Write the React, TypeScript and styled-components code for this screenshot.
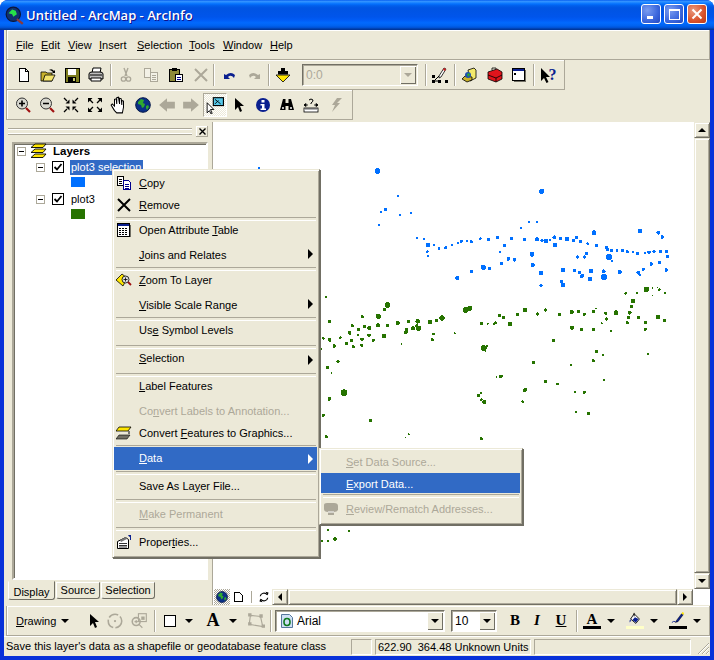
import React from 'react';
import styled, { createGlobalStyle } from 'styled-components';

const UI_FONT = '"Liberation Sans", Arial, sans-serif';
const FACE = '#ece9d8';
const SHADE = '#aca899';
const DARK = '#716f64';
const SELECT = '#316ac5';

const GlobalStyle = createGlobalStyle`
  html, body { margin: 0; padding: 0; background: #fff; }
  * { box-sizing: border-box; }
`;

const Window = styled.div`
  position: relative;
  width: 714px;
  height: 660px;
  display: flex;
  flex-direction: column;
  overflow: hidden;
  background: #0831d9;
  border-radius: 8px 8px 0 0;
  font-family: ${UI_FONT};
  font-size: 11px;
  color: #000;
`;

const TitleBar = styled.div`
  height: 30px;
  flex: none;
  display: flex;
  align-items: center;
  padding: 0 7px 0 5px;
  background: linear-gradient(180deg, #0058ee 0, #3593ff 4%, #288eff 7%, #127dff 10%, #036ffc 14%, #0262ee 18%, #0057e5 24%, #0054e3 30%, #0055eb 56%, #005bf5 66%, #026afe 76%, #0062ef 86%, #0052d6 92%, #0040ab 96%, #003092 100%);
`;

const TitleText = styled.div`
  flex: 1;
  margin-left: 2px;
  color: #fff;
  font-family: "Open Sans", sans-serif;
  font-weight: 600;
  font-size: 13px;
  text-shadow: 1px 1px 0 #0f1089;
`;

const CaptionButtons = styled.div`
  display: flex;
  gap: 3px;
`;

const CaptionButton = styled.div<{ $close?: boolean }>`
  width: 20px;
  height: 20px;
  margin-top: -3px;
  border: 1px solid #fff;
  border-radius: 3px;
  display: flex;
  align-items: center;
  justify-content: center;
  background: ${(p) =>
    p.$close
      ? 'radial-gradient(circle at 30% 30%, #e99a80, #d9512b 60%, #b93a1a)'
      : 'radial-gradient(circle at 30% 30%, #7a9cf0, #3a66dc 60%, #2347c0)'};
`;

const Frame = styled.div`
  flex: 1;
  min-height: 0;
  margin: 0 4px 4px;
  display: flex;
  flex-direction: column;
  background: ${FACE};
`;

const Band = styled.div<{ $fit?: boolean; $pad: number }>`
  height: 30px;
  flex: none;
  display: flex;
  align-items: center;
  margin-left: 2px;
  padding-left: ${(p) => p.$pad}px;
  ${(p) => (p.$fit ? 'align-self: flex-start;' : '')}
  border-left: 1px solid ${SHADE};
  border-bottom: 1px solid ${SHADE};
  border-right: 1px solid ${SHADE};
  box-shadow: inset 1px 1px 0 #fff;
`;

const MenuBar = styled(Band)`
  gap: 10px;
`;

const ToolGroup = styled.div<{ $gap?: number }>`
  display: flex;
  align-items: center;
  gap: ${(p) => p.$gap ?? 0}px;
`;

const ToolButton = styled.div<{ $w?: number }>`
  width: ${(p) => p.$w ?? 24}px;
  height: 24px;
  flex: none;
  display: flex;
  align-items: center;
  justify-content: center;
`;

const PressedButton = styled(ToolButton)`
  border: 1px solid;
  border-color: ${SHADE} #fff #fff ${SHADE};
  background-color: #fff;
  background-image: conic-gradient(${FACE} 25%, #fff 0 50%, ${FACE} 0 75%, #fff 0);
  background-size: 2px 2px;
`;

const HelpMark = styled.span`
  margin-left: -7px;
  font-family: "Liberation Serif", serif;
  font-weight: 700;
  font-size: 16px;
  line-height: 16px;
  color: #0a1f8f;
`;

const ToolSep = styled.div<{ $l?: number; $r?: number }>`
  width: 2px;
  height: 22px;
  flex: none;
  margin: 0 ${(p) => p.$r ?? 1}px 0 ${(p) => p.$l ?? 1}px;
  border-left: 1px solid ${SHADE};
  border-right: 1px solid #fff;
`;

const Combo = styled.div<{ $w: number; $bg?: string }>`
  width: ${(p) => p.$w}px;
  height: 22px;
  flex: none;
  display: flex;
  align-items: center;
  background: ${(p) => p.$bg ?? '#fff'};
  border: 1px solid;
  border-color: ${DARK} #fff #fff ${DARK};
  box-shadow: inset 1px 1px 0 ${SHADE};
`;

const ComboText = styled.div<{ $muted?: boolean }>`
  flex: 1;
  display: flex;
  align-items: center;
  gap: 2px;
  padding-left: 3px;
  font-size: 12px;
  color: ${(p) => (p.$muted ? SHADE : '#000')};
`;

const ComboDrop = styled.div`
  width: 16px;
  height: 18px;
  margin-right: 1px;
  flex: none;
  display: flex;
  align-items: center;
  justify-content: center;
  background: ${FACE};
  box-shadow: inset 1px 1px 0 #fff, inset -1px -1px 0 ${DARK};
`;

const Caret = styled.div<{ $dir?: 'down' | 'up' | 'left' | 'right'; $color?: string; $s?: number }>`
  width: 0;
  height: 0;
  flex: none;
  ${(p) => {
    const s = p.$s ?? 4;
    const c = p.$color ?? '#000';
    switch (p.$dir) {
      case 'up':
        return `border-left:${s}px solid transparent;border-right:${s}px solid transparent;border-bottom:${s}px solid ${c};`;
      case 'left':
        return `border-top:${s}px solid transparent;border-bottom:${s}px solid transparent;border-right:${s}px solid ${c};`;
      case 'right':
        return `border-top:${s}px solid transparent;border-bottom:${s}px solid transparent;border-left:${s}px solid ${c};`;
      default:
        return `border-left:${s}px solid transparent;border-right:${s}px solid transparent;border-top:${s}px solid ${c};`;
    }
  }}
`;

const Middle = styled.div`
  flex: 1;
  min-height: 0;
  display: flex;
  padding: 2px 0 1px;
`;

const Dock = styled.div`
  width: 209px;
  flex: none;
  display: flex;
  flex-direction: column;
  border-right: 1px solid ${SHADE};
  padding: 3px 4px 4px 8px;
`;

const DockHead = styled.div`
  height: 12px;
  flex: none;
  display: flex;
  align-items: center;
  gap: 4px;
  margin: 0 0 5px -4px;
`;

const DockGrip = styled.div`
  flex: 1;
  height: 7px;
  border-top: 1px solid ${SHADE};
  border-bottom: 1px solid ${SHADE};
  box-shadow: inset 0 1px 0 #fff, inset 0 -1px 0 #fff;
`;

const DockClose = styled.div`
  width: 12px;
  height: 11px;
  display: flex;
  align-items: center;
  justify-content: center;
  background: ${FACE};
  box-shadow: inset -1px -1px 0 ${SHADE}, inset 1px 1px 0 #fff;
`;

const TocBox = styled.div`
  flex: 1;
  min-height: 0;
  padding: 2px 0 0;
  background: #fff;
  border: 2px solid;
  border-color: ${SHADE} #fff #fff ${SHADE};
  box-shadow: inset 1px 1px 0 ${DARK};
`;

const TreeRow = styled.div<{ $indent: number }>`
  height: 16px;
  display: flex;
  align-items: center;
  padding-left: ${(p) => p.$indent}px;
`;

const RootRow = styled(TreeRow)`
  height: 10px;
  margin-bottom: 3px;
`;

const Expander = styled.div`
  position: relative;
  width: 9px;
  height: 9px;
  flex: none;
  background: #fff;
  border: 1px solid ${SHADE};
  &::after {
    content: '';
    position: absolute;
    left: 1px;
    top: 3px;
    width: 5px;
    height: 1px;
    background: #000;
  }
`;

const CheckBox = styled.div`
  width: 12px;
  height: 12px;
  flex: none;
  margin-left: 7px;
  border: 1px solid #000;
  background: #fff;
  display: flex;
  align-items: center;
  justify-content: center;
`;

const LayerGroup = styled.div`
  font-weight: 700;
  margin-left: 6px;
  font-size: 11.5px;
`;

const LayerLabel = styled.div<{ $selected?: boolean }>`
  margin-left: 6px;
  padding: 0 2px 0 1px;
  height: 15px;
  line-height: 15px;
  white-space: nowrap;
  color: ${(p) => (p.$selected ? '#fff' : '#000')};
  background: ${(p) => (p.$selected ? SELECT : 'transparent')};
`;

const Swatch = styled.div<{ $color: string }>`
  width: 14px;
  height: 10px;
  margin: 2px 0 4px 57px;
  background: ${(p) => p.$color};
`;

const Tabs = styled.div`
  height: 21px;
  flex: none;
  display: flex;
  align-items: flex-start;
  margin-left: -4px;
  padding-top: 2px;
`;

const Tab = styled.div<{ $active?: boolean; $w: number }>`
  width: ${(p) => p.$w}px;
  height: ${(p) => (p.$active ? 19 : 17)}px;
  margin-top: ${(p) => (p.$active ? -1 : 0)}px;
  margin-right: 1px;
  padding-top: ${(p) => (p.$active ? 3 : 0)}px;
  text-align: center;
  line-height: 15px;
  border: 1px solid;
  border-color: ${(p) => (p.$active ? FACE : '#fff')} ${DARK} ${DARK} #fff;
  border-radius: 0 0 3px 3px;
`;

const MapArea = styled.div`
  flex: 1;
  min-width: 0;
  display: flex;
  flex-direction: column;
`;

const MapRow = styled.div`
  flex: 1;
  min-height: 0;
  display: flex;
`;

const MapCanvas = styled.div`
  flex: 1;
  min-width: 0;
  background: #fff;
  svg { display: block; }
`;

const VScroll = styled.div`
  width: 16px;
  flex: none;
  display: flex;
  flex-direction: column;
`;

const ScrollButton = styled.div`
  width: 16px;
  height: 16px;
  flex: none;
  display: flex;
  align-items: center;
  justify-content: center;
  background: ${FACE};
  border: 1px solid;
  border-color: ${FACE} ${DARK} ${DARK} ${FACE};
  box-shadow: inset 1px 1px 0 #fff, inset -1px -1px 0 ${SHADE};
`;

const ScrollThumb = styled.div`
  flex: 1;
  background: ${FACE};
  border: 1px solid;
  border-color: ${FACE} ${DARK} ${DARK} ${FACE};
  box-shadow: inset 1px 1px 0 #fff, inset -1px -1px 0 ${SHADE};
`;

const HScroll = styled.div`
  height: 16px;
  flex: none;
  display: flex;
  background: #fff;
`;

const ViewTabs = styled.div`
  width: 59px;
  flex: none;
  display: flex;
  align-items: center;
  padding-left: 1px;
  background: #fff;
`;

const ViewTab = styled.div<{ $w: number; $checked?: boolean }>`
  width: ${(p) => p.$w}px;
  height: 16px;
  display: flex;
  align-items: center;
  justify-content: center;
  ${(p) =>
    p.$checked
      ? `background-color:#fff;background-image:conic-gradient(${SHADE} 25%,#fff 0 50%,${SHADE} 0 75%,#fff 0);background-size:2px 2px;`
      : ''}
`;

const ViewSep = styled.div`
  width: 1px;
  height: 12px;
  margin: 0 5px;
  background: ${SHADE};
`;

const Corner = styled.div`
  width: 17px;
  flex: none;
  background: #fff;
`;

const DrawingLabel = styled.div`
  width: 38px;
  margin-right: 7px;
`;

const BoldGlyph = styled.span<{ $italic?: boolean; $under?: boolean; $size?: number }>`
  font-family: "Liberation Serif", serif;
  font-weight: 700;
  font-size: ${(p) => p.$size ?? 15}px;
  font-style: ${(p) => (p.$italic ? 'italic' : 'normal')};
  text-decoration: ${(p) => (p.$under ? 'underline' : 'none')};
`;

const ColorGlyph = styled.div`
  display: flex;
  flex-direction: column;
  align-items: center;
  line-height: 13px;
`;

const ColorBar = styled.div<{ $color: string }>`
  width: 18px;
  height: 3px;
  background: ${(p) => p.$color};
`;

const StatusBar = styled.div`
  height: 20px;
  flex: none;
  display: flex;
  align-items: center;
  padding-top: 2px;
  box-shadow: inset 0 1px 0 #fff;
`;

const StatusPanel = styled.div<{ $w?: number; $grow?: boolean; $plain?: boolean }>`
  ${(p) => (p.$grow ? 'flex: 1;' : `width: ${p.$w}px; flex: none;`)}
  height: 16px;
  line-height: 15px;
  padding-left: 2px;
  margin-right: 3px;
  white-space: nowrap;
  ${(p) => (p.$plain ? '' : `border: 1px solid; border-color: ${SHADE} #fff #fff ${SHADE};`)}
`;

const Grip = styled.div`
  width: 16px;
  height: 16px;
  flex: none;
`;

const PopupMenu = styled.div<{ $left: number; $top: number; $w: number }>`
  position: absolute;
  left: ${(p) => p.$left}px;
  top: ${(p) => p.$top}px;
  width: ${(p) => p.$w}px;
  padding: 2px 2px 3px 1px;
  background: ${FACE};
  border: 1px solid;
  border-color: ${FACE} ${DARK} ${DARK} ${FACE};
  box-shadow: inset 1px 1px 0 #fff, inset -1px -1px 0 ${SHADE}, 1px 1px 0 ${DARK};
`;

const MenuRow = styled.div<{ $h: number; $shift: number; $active?: boolean; $off?: boolean }>`
  position: relative;
  height: ${(p) => p.$h}px;
  padding: ${(p) => Math.max(p.$shift, 0)}px 0 ${(p) => Math.max(-p.$shift, 0)}px 25px;
  display: flex;
  align-items: center;
  white-space: nowrap;
  color: ${(p) => (p.$active ? '#fff' : p.$off ? SHADE : '#000')};
  background: ${(p) => (p.$active ? SELECT : 'transparent')};
`;

const MenuIcon = styled.div`
  position: absolute;
  left: 2px;
  top: 50%;
  margin-top: -8px;
  width: 16px;
  height: 16px;
`;

const MenuArrow = styled.div`
  position: absolute;
  right: 4px;
  top: 50%;
  margin-top: -5px;
`;

const MenuSep = styled.div`
  height: 3px;
  margin: 0 1px 0 2px;
  padding-top: 1px;
  &::after {
    content: '';
    display: block;
    height: 2px;
    border-top: 1px solid ${SHADE};
    border-bottom: 1px solid #fff;
  }
`;

const MenuTitle = styled.div<{ $w: number }>`
  width: ${(p) => p.$w}px;
  white-space: nowrap;
`;

// icons, all on a 16 unit grid
const Ico = ({ s = 16, crisp = false, children }: { s?: number; crisp?: boolean; children: React.ReactNode }) => (
  <svg width={s} height={s} viewBox="0 0 16 16" shapeRendering={crisp ? 'crispEdges' : 'auto'}>
    {children}
  </svg>
);

const GlobeArt = () => (
  <>
    <circle cx="8" cy="8" r="7.3" fill="#0a2f86" stroke="#071a4a" />
    <path d="M3 5l3-3 3 1-1 3 2 1-1 3-2 1-1-3-3-1zM11 9l2-1 1 2-2 3-1-2z" fill="#2fa82f" />
  </>
);

const ArrowArt = ({ fill = '#000' }: { fill?: string }) => (
  <path d="M4 1v12l3-3 2 5 2-1-2-5h4z" fill={fill} />
);

const Icons: Record<string, React.ReactNode> = {
  logo: (
    <Ico s={19}>
      <circle cx="7" cy="7" r="6" fill="#12306e" stroke="#0b1638" />
      <path d="M3 6l3-3 3 1 1 3-3 2-1-2z" fill="#27e04a" />
      <path d="M10 11l5 4" stroke="#8b3a3a" strokeWidth="2" />
    </Ico>
  ),
  newDoc: (
    <Ico crisp>
      <path d="M3.5 1.5h6l3 3v10h-9z" fill="#fff" stroke="#000" />
      <path d="M9.5 1.5v3h3" fill="none" stroke="#000" />
    </Ico>
  ),
  open: (
    <Ico>
      <path d="M1 5h5l1 1h5v8H1z" fill="#c9b12b" stroke="#000" strokeWidth=".8" />
      <path d="M3 14l2-6h10l-3 6z" fill="#f3e36b" stroke="#000" strokeWidth=".8" />
      <path d="M9 3q3-2 5 1l1-1v3h-3l1-1q-2-2-4-2z" fill="#000" />
    </Ico>
  ),
  save: (
    <Ico crisp>
      <rect x="1" y="1" width="14" height="14" fill="#7d7d1e" stroke="#000" />
      <rect x="4" y="2" width="8" height="6" fill="#fff" />
      <rect x="4" y="10" width="8" height="5" fill="#000" />
      <rect x="9" y="11" width="2" height="3" fill="#c9c96a" />
    </Ico>
  ),
  print: (
    <Ico>
      <path d="M5 1h8l-1 5H4z" fill="#fff" stroke="#000" />
      <path d="M1 7q0-2 3-2h8q3 0 3 2v5H1z" fill="#bdbdbd" stroke="#000" />
      <path d="M3 11h10v3H3z" fill="#fff" stroke="#000" />
      <path d="M2 8h12" stroke="#000" />
    </Ico>
  ),
  cut: (
    <Ico>
      <path d="M6 1l3 8M10 1L7 9" stroke={SHADE} strokeWidth="1.4" fill="none" />
      <circle cx="5.5" cy="12" r="2.2" fill="none" stroke={SHADE} strokeWidth="1.3" />
      <circle cx="10.5" cy="12" r="2.2" fill="none" stroke={SHADE} strokeWidth="1.3" />
    </Ico>
  ),
  copyOff: (
    <Ico crisp>
      <path d="M1.5 1.5h6v9h-6z" fill="#f3f1e6" stroke={SHADE} />
      <path d="M7.5 5.5h7v9h-7z" fill="#f3f1e6" stroke={SHADE} />
      <path d="M9 8h4M9 10h4M9 12h4" stroke={SHADE} />
    </Ico>
  ),
  paste: (
    <Ico crisp>
      <rect x="1.5" y="2.5" width="10" height="12" fill="#8d8a37" stroke="#000" />
      <rect x="4" y="1" width="5" height="3" fill="#000" />
      <rect x="7.5" y="7.5" width="7" height="7" fill="#fff" stroke="#000" />
      <path d="M9 10h4M9 12h4" stroke="#00008b" />
    </Ico>
  ),
  delOff: (
    <Ico>
      <path d="M2 2l12 12M14 2L2 14" stroke={SHADE} strokeWidth="2" />
    </Ico>
  ),
  undo: (
    <Ico>
      <path d="M4 8q5-4 9 0l-1 3q-3-4-6-1l2 2H2V7z" fill="#0a1f8f" />
    </Ico>
  ),
  redo: (
    <Ico>
      <path d="M12 8q-5-4-9 0l1 3q3-4 6-1l-2 2h6V7z" fill={SHADE} />
    </Ico>
  ),
  addData: (
    <Ico>
      <path d="M1 8h14l-7 7z" fill="#ffe600" stroke="#000" strokeWidth=".8" />
      <path d="M6 1h4v3h3v3.5H3V4h3z" fill="#000" />
    </Ico>
  ),
  editor: (
    <Ico>
      <path d="M2 14l5-5M8 14H2" stroke="#000" />
      <path d="M7 9l5-8 2 1-5 8-2 1z" fill="#fff" stroke="#000" strokeWidth=".8" />
      <path d="M12 1l2 1-1 2-2-1z" fill="#d02020" />
      <path d="M0 8h3v3H0zM0 13h3v3H0zM6 13h3v3H6zM13 13h3v3h-3z" fill="#000" />
    </Ico>
  ),
  catalog: (
    <Ico>
      <path d="M7 3l6-2 2 2v8l-6 3z" fill="#f3e96a" stroke="#000" strokeWidth=".8" />
      <path d="M1 12l3-3 7 1v3l-5 2z" fill="#c9b12b" stroke="#000" strokeWidth=".8" />
      <circle cx="7" cy="8" r="3" fill="#1c50b0" />
      <path d="M6 7l2-1 1 2-2 2z" fill="#2fa82f" />
    </Ico>
  ),
  toolbox: (
    <Ico>
      <path d="M1 5l9-3 5 3v7l-6 3-8-3z" fill="#e0141c" stroke="#000" strokeWidth=".8" />
      <path d="M1 8l8 3 6-3M9 11v4M5 3V1h4v1" stroke="#000" strokeWidth=".8" fill="none" />
    </Ico>
  ),
  cmd: (
    <Ico crisp>
      <rect x="1.5" y="1.5" width="12" height="12" fill="#fff" stroke="#000" />
      <rect x="2" y="2" width="11" height="2" fill="#0a1f8f" />
      <rect x="14" y="3" width="1" height="11" fill={DARK} />
      <rect x="3" y="14" width="12" height="1" fill={DARK} />
      <path d="M3 6l2 1-2 1" stroke="#000" fill="none" />
    </Ico>
  ),
  helpArrow: (
    <Ico s={16}>
      <path d="M1 1v13l3-3 2.500 5 2-1-2.500-5h4z" fill="#000" />
    </Ico>
  ),
  zoomIn: (
    <Ico>
      <circle cx="7" cy="6.500" r="5.500" fill="#d8d8d0" stroke="#333" />
      <path d="M4 6.500h6M7 3.500v6" stroke="#000" strokeWidth="1.600" />
      <path d="M11 11l4 4" stroke="#a01010" strokeWidth="2.200" />
    </Ico>
  ),
  zoomOut: (
    <Ico>
      <circle cx="7" cy="6.500" r="5.500" fill="#d8d8d0" stroke="#333" />
      <path d="M4 6.500h6" stroke="#000" strokeWidth="1.600" />
      <path d="M11 11l4 4" stroke="#a01010" strokeWidth="2.200" />
    </Ico>
  ),
  fixedIn: (
    <Ico>
      <path d="M6.500 6.500H2.500L6.500 2.500zM9.500 6.500h4l-4-4zM6.500 9.500h-4l4 4zM9.500 9.500h4l-4 4z" fill="#000" />
      <path d="M1 1l3 3M15 1l-3 3M1 15l3-3M15 15l-3-3" stroke="#000" strokeWidth="1.300" />
    </Ico>
  ),
  fixedOut: (
    <Ico>
      <path d="M1 1h4.500L1 5.500zM15 1h-4.500L15 5.500zM1 15h4.500L1 10.500zM15 15h-4.500L15 10.500z" fill="#000" />
      <path d="M3 3l3 3M13 3l-3 3M3 13l3-3M13 13l-3-3" stroke="#000" strokeWidth="1.300" />
    </Ico>
  ),
  pan: (
    <Ico s={18}>
      <path d="M4 13L1 8l1-1 2 2V3l1.500-.500L6 7V1.500L7.500 1 8.500 7V2l1.500.500L10.500 8V4l1.500.500V10l-1 5H6z" fill="#fff" stroke="#000" strokeWidth=".9" />
    </Ico>
  ),
  globe: (
    <Ico>
      <GlobeArt />
    </Ico>
  ),
  back: (
    <Ico s={18}>
      <path d="M1 8l7-6v3h7v6H8v3z" fill={SHADE} />
    </Ico>
  ),
  forward: (
    <Ico s={18}>
      <path d="M15 8L8 2v3H1v6h7v3z" fill={SHADE} />
    </Ico>
  ),
  selectEl: (
    <Ico s={18}>
      <path d="M1 6v9l2-2 1.500 3 1-.500L4 12h3z" fill="#fff" stroke="#000" strokeWidth=".8" />
      <rect x="6.500" y="1.500" width="9" height="7" fill="#57c7e8" stroke="#000" />
      <path d="M8 3l5 4M8 7l3-3" stroke="#000" strokeWidth=".8" />
    </Ico>
  ),
  pointer: (
    <Ico>
      <ArrowArt />
    </Ico>
  ),
  info: (
    <Ico>
      <circle cx="8" cy="8" r="7" fill="#0a1f8f" />
      <rect x="6.500" y="3" width="3" height="2.500" fill="#fff" />
      <path d="M5.500 7H9.500V11.500H11V13H5.500V11.500H7V8.500H5.500z" fill="#fff" />
    </Ico>
  ),
  find: (
    <Ico>
      <path d="M4 2h2.500v4H9.500V2H12l3 11H9.500V9h-3v4H1z" fill="#000" />
      <path d="M3 10h2v2H3zM11 10h2v2h-2z" fill="#bbb" />
    </Ico>
  ),
  measure: (
    <Ico>
      <rect x="1" y="11" width="14" height="4" fill="#fff" stroke="#000" strokeWidth=".8" />
      <path d="M3 11v2M5 11v2M7 11v2M9 11v2M11 11v2M13 11v2" stroke="#000" strokeWidth=".6" />
      <path d="M1 8h4M11 8h4M1 8l2-1.500v3zM15 8l-2-1.500v3z" stroke="#000" strokeWidth=".8" />
      <path d="M6 3q2-2 4 0 0 2-2 3v1" fill="none" stroke="#000" />
    </Ico>
  ),
  bolt: (
    <Ico>
      <path d="M10 1H15L10 6H13L5 15L8 8H5z" fill={SHADE} />
    </Ico>
  ),
  copy: (
    <Ico crisp>
      <path d="M1.500 1.500h6v9h-6z" fill="#fff" stroke="#000" />
      <path d="M3 4h3M3 6h3M3 8h3" stroke="#000" />
      <path d="M7.500 5.500h5l2 2v7h-7z" fill="#fff" stroke="#00008b" />
      <path d="M9 9h4M9 11h4M9 13h4" stroke="#00008b" />
    </Ico>
  ),
  remove: (
    <Ico>
      <path d="M2 2l12 12M14 2L2 14" stroke="#000" strokeWidth="2" />
    </Ico>
  ),
  table: (
    <Ico crisp>
      <rect x="1.500" y="1.500" width="12" height="13" fill="#fff" stroke="#000" />
      <rect x="2" y="2" width="11" height="2" fill="#0a1f8f" />
      <path d="M3 6h9M3 8h9M3 10h9M3 12h9" stroke="#000" />
      <path d="M5 5v8M8 5v8M11 5v8" stroke="#fff" />
      <rect x="14" y="3" width="1" height="12" fill={DARK} />
    </Ico>
  ),
  zoomLayer: (
    <Ico>
      <path d="M0 8l6-6 5 4-4 8z" fill="#ffe600" stroke="#000" strokeWidth=".8" />
      <circle cx="9.500" cy="7.500" r="3.500" fill="#ddd" stroke="#000" strokeWidth=".8" />
      <path d="M7.500 7.500h4M9.500 5.500v4" stroke="#000" strokeWidth=".8" />
      <path d="M12 10l3 3" stroke="#a01010" strokeWidth="1.800" />
    </Ico>
  ),
  convert: (
    <Ico>
      <path d="M3 2h12l-3 4H0z" fill="#ffe600" stroke="#000" strokeWidth=".8" />
      <path d="M3 10h11l-3 4H0z" fill={DARK} stroke="#000" strokeWidth=".6" />
      <path d="M13 6v3" stroke="#000" />
    </Ico>
  ),
  properties: (
    <Ico>
      <path d="M1.500 7.500l8-4 3 2v9h-11z" fill="#fff" stroke="#000" />
      <path d="M3 9.500h8M3 11.500h8M3 13h8" stroke="#000" strokeWidth=".8" />
      <path d="M4 6l6-3 1 2-6 3z" fill="#777" />
      <path d="M12 1h3v5h-1V3l-1-.500z" fill="#0a1f8f" />
    </Ico>
  ),
  layers: (
    <Ico>
      <path d="M4 1h11l-3 3.500H0zM4 6h11l-3 3.500H0zM4 11h11l-3 3.500H0z" fill="#ffe600" stroke="#000" strokeWidth=".9" />
    </Ico>
  ),
  review: (
    <Ico>
      <path d="M1 4q0-2 3-2h7q4 0 4 3v4q-1 2-4 2v3H5v-3Q1 11 1 8z" fill={SHADE} />
      <path d="M5 11h6" stroke="#fff" />
    </Ico>
  ),
  page: (
    <Ico s={12} crisp>
      <path d="M3.500 2.500h7l3 3v9h-10z" fill="#fff" stroke="#000" strokeWidth="1.500" />
    </Ico>
  ),
  refresh: (
    <Ico s={12}>
      <path d="M3 7a5 5 0 0 1 9-2M13 9a5 5 0 0 1-9 2" fill="none" stroke="#000" strokeWidth="1.600" />
      <path d="M10 1l4 1-1 4zM6 15l-4-1 1-4z" fill="#000" />
    </Ico>
  ),
  rotate: (
    <Ico s={18}>
      <circle cx="8" cy="8" r="6" fill="none" stroke={SHADE} strokeWidth="1.400" strokeDasharray="9 2" />
      <circle cx="8" cy="8" r="1" fill={SHADE} />
    </Ico>
  ),
  zoomEl: (
    <Ico s={18}>
      <circle cx="5.500" cy="8.500" r="3.500" fill="none" stroke={SHADE} strokeWidth="1.400" />
      <path d="M4 8.500h3M5.500 7v3M8 11l3 3" stroke={SHADE} />
      <rect x="7.500" y="1.500" width="7" height="7" fill="none" stroke={SHADE} />
      <path d="M10 4h3v3h-3z" fill={SHADE} />
    </Ico>
  ),
  rect: (
    <Ico>
      <rect x="2.500" y="2.500" width="11" height="11" fill="#fff" stroke="#000" />
    </Ico>
  ),
  vertices: (
    <Ico s={18}>
      <path d="M3 3l9 1 2 9-12-2z" fill="none" stroke={SHADE} />
      <path d="M1 1h3v3H1zM11 2h3v3h-3zM13 11h3v3h-3zM1 9h3v3H1z" fill={SHADE} />
    </Ico>
  ),
  fontFace: (
    <Ico>
      <path d="M2.500 1.500h8l3 3v10h-11z" fill="#cfe0f5" stroke="#56789c" />
      <ellipse cx="8" cy="9" rx="3" ry="3.500" fill="none" stroke="#0e7a1e" strokeWidth="1.600" />
    </Ico>
  ),
  fill: (
    <Ico s={14}>
      <path d="M7 2l6 6-4 5-6-5z" fill="#fff" stroke="#000" />
      <path d="M3 8q-2 2-1 4 2-1 1-4zM8 6l4 2-3 4-4-3z" fill="#0a1f8f" />
      <path d="M7 1v4" stroke="#000" />
    </Ico>
  ),
  pen: (
    <Ico s={14}>
      <path d="M6 10l6-8 2 1-6 8-3 1z" fill="#0a1f8f" stroke="#000" strokeWidth=".5" />
      <path d="M12 2l2 1 1-2-2-1z" fill="#ffe600" />
      <path d="M1 12q2-2 4-1" stroke="#0a1f8f" fill="none" />
    </Ico>
  ),
};

const Mnemonic = ({ text }: { text: string }) => {
  const at = text.indexOf('&');
  if (at < 0) return <>{text}</>;
  return (
    <span>
      {text.slice(0, at)}
      <u>{text[at + 1]}</u>
      {text.slice(at + 2)}
    </span>
  );
};

type MenuEntry =
  | 'sep'
  | { label: string; icon?: string; h?: number; shift?: number; off?: boolean; arrow?: boolean; active?: boolean };

const contextMenu: MenuEntry[] = [
  { label: '&Copy', icon: 'copy' },
  { label: '&Remove', icon: 'remove' },
  'sep',
  { label: 'Open Attribute &Table', icon: 'table' },
  { label: '&Joins and Relates', h: 25, shift: 3, arrow: true },
  'sep',
  { label: '&Zoom To Layer', icon: 'zoomLayer' },
  { label: '&Visible Scale Range', h: 25, shift: 3, arrow: true },
  'sep',
  { label: 'Us&e Symbol Levels', h: 25, shift: -3 },
  'sep',
  { label: '&Selection', h: 25, shift: -3, arrow: true },
  'sep',
  { label: '&Label Features', h: 25, shift: -3 },
  { label: 'Co&nvert Labels to Annotation...', off: true },
  { label: 'Convert &Features to Graphics...', icon: 'convert' },
  'sep',
  { label: '&Data', active: true, arrow: true, h: 23, shift: -1 },
  'sep',
  { label: 'Save As La&yer File...', h: 25 },
  'sep',
  { label: '&Make Permanent', h: 25, off: true },
  'sep',
  { label: 'Proper&ties...', icon: 'properties', h: 25 },
];

const dataMenu: MenuEntry[] = [
  { label: '&Set Data Source...', off: true },
  { label: '&Export Data...', active: true, h: 20, shift: 1 },
  'sep',
  { label: '&Review/Rematch Addresses...', icon: 'review', off: true, h: 25 },
];

const Menu = ({ items, left, top, w }: { items: MenuEntry[]; left: number; top: number; w: number }) => (
  <PopupMenu $left={left} $top={top} $w={w}>
    {items.map((item, i) =>
      item === 'sep' ? (
        <MenuSep key={i} />
      ) : (
        <MenuRow key={i} $h={item.h ?? 22} $shift={item.shift ?? 0} $active={item.active} $off={item.off}>
          {item.icon && <MenuIcon>{Icons[item.icon]}</MenuIcon>}
          <Mnemonic text={item.label} />
          {item.arrow && (
            <MenuArrow>
              <Caret $dir="right" $s={5} $color={item.active ? '#fff' : '#000'} />
            </MenuArrow>
          )}
        </MenuRow>
      )
    )}
  </PopupMenu>
);

// map points as [x, y, r], measured in 3x crop coordinates of the map
const bluePoints: number[][] = [
  [172,123,2.5],[665,184,2.3],[234,198,1],[196,238,1.3],[183,246,1],[240,255,1],[272,249,1],[177,285,1],[604,294,.7],[627,277,.8],[651,276,1],
  [291,324,1],[312,327,1],[324,345,1.8],[342,345,1],[357,355,1.2],[377,353,1.2],[396,346,1],[414,339,.8],[424,334,1.2],[441,333,1],[454,335,1.2],[481,326,1],[505,328,1.3],[533,323,1.3],[574,325,1.5],[613,329,1.3],[651,328,2],[666,331,1.3],[678,333,1.8],[690,329,.8],[703,322,1.6],[721,326,1.4],[741,327,1.9],[760,331,1.5],[769,323,1.4],[781,335,1.4],[803,341,1],[822,308,2.2],[829,347,1.5],[859,352,1.5],[862,359,1.4],[875,362,1.3],[891,362,1.2],[908,362,1.3],[922,365,1.2],[939,366,1],[952,370,1.4],[975,369,1],[987,367,1.5],[1002,364,1.3],[1021,364,1.4],[1040,365,1.3],[1043,380,1.3],[960,303,2],[1015,308,1.7],[1027,321,1.5],
  [322,365,1.1],[324,378,.8],[553,347,1.5],[540,366,1],[636,373,2.2],[565,387,1.6],[584,389,1.6],[545,401,1.5],[490,412,2.2],[508,415,1.5],[454,424,1.4],[412,444,1.8],[638,405,1.9],[663,429,1.9],[663,466,1.4],[725,455,1.3],[729,465,2],[729,420,2],[764,422,1.5],[779,427,1.4],[786,438,1.7],[810,447,1.9],[813,423,1.9],[851,424,1.6],[852,441,2.8],[899,426,2],[955,428,1.6],[960,435,1],[970,418,1.2],[994,402,1.5],[1018,397,1.3],[1039,420,1.5],[867,381,2.9],[876,393,.8],[799,370,1.3],[793,381,1.4],[772,381,1.3],[705,345,1.8],
  [-183,114,.8],
];

const greenPoints: number[][] = [
  [17,501,1],[202,525,2.4],[193,538,1.5],[175,559,2.4],[127,560,1.2],[28,574,1.4],[97,587,1.2],[115,598,1.3],[133,590,1.5],[148,594,1.7],[174,586,1.7],[202,586,1.5],[233,579,2],[265,574,1.3],[293,574,2],[330,576,1.9],[350,572,1.4],[366,564,2.4],[437,540,2.5],[449,535,2.2],[485,580,1.3],[503,581,.8],[522,581,1],[527,578,1],[570,582,1.9],[539,556,1.4],[551,562,1.3],[592,553,1.4],[615,540,1.9],[652,552,1.3],[676,540,1.3],[718,553,1.4],[755,546,2],[775,544,1.4],[793,553,1.2],[820,544,1.5],[828,536,.7],[857,550,1.2],[888,548,2.2],[929,548,1.7],[925,562,1.3],[955,562,1.3],[859,567,1.3],[845,580,.6],[922,578,1.2],[976,577,1.5],[1014,561,1.8],[1033,571,1.3],[976,598,1.2],[756,593,1.9],[785,598,1.3],[820,598,1.3],[873,604,1],[917,490,1],[951,489,.8],[979,478,2.5],[997,474,.5],[1012,472,.5],[1018,479,1],[1035,490,1],[998,496,.5],[939,513,1.9],[934,529,1.5],
  [10,625,1.1],[29,630,1.6],[61,623,1],[43,648,1.5],[79,640,1.3],[94,631,1.4],[89,609,1.6],[114,615,1],[126,628,1.5],[100,650,1.2],[125,646,1.2],[147,616,1.5],[160,631,1.2],[192,618,1.8],[258,606,1.7],[259,598,1.2],[279,595,2],[290,588,1.5],[296,595,2.2],[340,612,1.2],[337,629,1.2],[245,642,.7],[404,610,.8],[3,657,.7],
  [491,654,2.7],[500,648,1],[496,662,.6],[700,631,1.3],[830,664,1.4],[849,676,1],[983,672,1],[820,692,1.2],[640,698,1.3],[753,704,.8],[54,694,1.4],[22,712,1.3],[34,729,.6],[72,788,3],[28,807,1.6],[10,856,1.2],[151,871,1.5],[19,920,1.2],[266,913,.6],[256,922,.5],[484,926,1.2],[543,739,1.6],[530,741,.7],[676,754,1.4],[712,762,1.2],[853,749,.9],[615,780,1.7],[483,789,1],[476,796,1.4],[484,809,1],[493,816,2],[608,815,1],[765,785,1],[793,787,1.2],[768,845,1],[805,850,1.3],
  [24,1200,1],[87,1203,1],[6,1233,1],[24,1233,1],[45,1227,1.4],
];

const MapPoints = ({ points, color }: { points: number[][]; color: string }) => (
  <g fill={color}>
    {points.map(([x, y, r], i) => (
      <circle key={i} cx={320 + x / 3} cy={130 + y / 3} r={r + 0.3} />
    ))}
  </g>
);

const menuNames: [string, number][] = [
  ['&File', 15],
  ['&Edit', 17],
  ['&View', 21],
  ['&Insert', 28],
  ['&Selection', 42],
  ['&Tools', 24],
  ['&Window', 37],
  ['&Help', 22],
];

const Check = () => (
  <CheckBox>
    <svg width="10" height="10" viewBox="0 0 10 10"><path d="M1.500 5l2.500 2.500 4.500-5.500" fill="none" stroke="#000" strokeWidth="1.800" /></svg>
  </CheckBox>
);

const Tool = ({ name, w }: { name: string; w?: number }) => <ToolButton $w={w}>{Icons[name]}</ToolButton>;

export default function App() {
  return (
    <Window>
      <GlobalStyle />
      <TitleBar>
        {Icons.logo}
        <TitleText>Untitled - ArcMap - ArcInfo</TitleText>
        <CaptionButtons>
          <CaptionButton>
            <svg width="14" height="14" viewBox="0 0 14 14" shapeRendering="crispEdges"><rect x="3" y="9" width="6" height="3" fill="#fff" /></svg>
          </CaptionButton>
          <CaptionButton>
            <svg width="14" height="14" viewBox="0 0 14 14" shapeRendering="crispEdges"><path d="M2 2h10v10H2z" fill="none" stroke="#fff" /><rect x="2" y="2" width="10" height="2" fill="#fff" /></svg>
          </CaptionButton>
          <CaptionButton $close>
            <svg width="14" height="14" viewBox="0 0 14 14"><path d="M2.500 2.500l9 9M11.500 2.500l-9 9" stroke="#fff" strokeWidth="2" /></svg>
          </CaptionButton>
        </CaptionButtons>
      </TitleBar>
      <Frame>
        <MenuBar $pad={9}>
          {menuNames.map(([m, w]) => (
            <MenuTitle key={m} $w={w}>
              <Mnemonic text={m} />
            </MenuTitle>
          ))}
        </MenuBar>
        <Band $fit $pad={5}>
          <ToolGroup>
            <Tool name="newDoc" />
            <Tool name="open" />
            <Tool name="save" />
            <Tool name="print" />
          </ToolGroup>
          <ToolSep $l={2} $r={2} />
          <ToolGroup $gap={1}>
            <Tool name="cut" />
            <Tool name="copyOff" />
            <Tool name="paste" />
            <Tool name="delOff" w={23} />
          </ToolGroup>
          <ToolSep $l={1} $r={3} />
          <ToolGroup>
            <Tool name="undo" />
            <Tool name="redo" />
          </ToolGroup>
          <ToolSep $l={2} />
          <Tool name="addData" />
          <ToolButton $w={7} />
          <Combo $w={116} $bg={FACE}>
            <ComboText $muted>0:0</ComboText>
            <ComboDrop>
              <Caret $color={SHADE} />
            </ComboDrop>
          </Combo>
          <ToolSep $l={7} $r={1} />
          <Tool name="editor" />
          <ToolSep $l={2} />
          <ToolGroup>
            <Tool name="catalog" />
            <ToolButton $w={2} />
            <Tool name="toolbox" />
            <Tool name="cmd" />
          </ToolGroup>
          <ToolSep $l={2} />
          <ToolButton>
            {Icons.helpArrow}
            <HelpMark>?</HelpMark>
          </ToolButton>
          <ToolButton $w={4} />
        </Band>
        <Band $fit $pad={4}>
          <Tool name="zoomIn" />
          <Tool name="zoomOut" />
          <Tool name="fixedIn" />
          <Tool name="fixedOut" />
          <Tool name="pan" />
          <Tool name="globe" />
          <Tool name="back" />
          <Tool name="forward" />
          <PressedButton>{Icons.selectEl}</PressedButton>
          <Tool name="pointer" />
          <Tool name="info" />
          <Tool name="find" />
          <Tool name="measure" />
          <Tool name="bolt" />
          <ToolButton $w={5} />
        </Band>
        <Middle>
          <Dock>
            <DockHead>
              <DockGrip />
              <DockClose>
                <svg width="7" height="7" viewBox="0 0 7 7"><path d="M.5.5l6 6M6.500.5l-6 6" stroke="#000" strokeWidth="1.400" /></svg>
              </DockClose>
            </DockHead>
            <TocBox>
              <RootRow $indent={3}>
                <Expander />
                <ToolButton $w={5} />
                {Icons.layers}
                <LayerGroup>Layers</LayerGroup>
              </RootRow>
              <TreeRow $indent={22}>
                <Expander />
                <Check />
                <LayerLabel $selected>plot3 selection</LayerLabel>
              </TreeRow>
              <Swatch $color="#0070ff" />
              <TreeRow $indent={22}>
                <Expander />
                <Check />
                <LayerLabel>plot3</LayerLabel>
              </TreeRow>
              <Swatch $color="#267300" />
            </TocBox>
            <Tabs>
              <Tab $active $w={47}>Display</Tab>
              <Tab $w={44}>Source</Tab>
              <Tab $w={54}>Selection</Tab>
            </Tabs>
          </Dock>
          <MapArea>
            <MapRow>
              <MapCanvas>
                <svg width="480" height="466" viewBox="213 122 480 466" shapeRendering="crispEdges">
                  <MapPoints points={bluePoints} color="#0070ff" />
                  <MapPoints points={greenPoints} color="#267300" />
                </svg>
              </MapCanvas>
              <VScroll>
                <ScrollButton><Caret $dir="up" /></ScrollButton>
                <ScrollThumb />
                <ScrollButton><Caret /></ScrollButton>
              </VScroll>
            </MapRow>
            <HScroll>
              <ViewTabs>
                <ViewTab $w={16} $checked><Ico s={12}><GlobeArt /></Ico></ViewTab>
                <ViewTab $w={16}>{Icons.page}</ViewTab>
                <ViewSep />
                <ViewTab $w={14}>{Icons.refresh}</ViewTab>
              </ViewTabs>
              <ScrollButton><Caret $dir="left" /></ScrollButton>
              <ScrollThumb />
              <ScrollButton><Caret $dir="right" /></ScrollButton>
              <Corner />
            </HScroll>
          </MapArea>
        </Middle>
        <Band $pad={9}>
          <DrawingLabel><Mnemonic text="&Drawing" /></DrawingLabel>
          <Caret />
          <ToolButton $w={13} />
          <Tool name="pointer" />
          <Tool name="rotate" w={18} />
          <Tool name="zoomEl" w={30} />
          <ToolSep $l={0} $r={3} />
          <Tool name="rect" w={22} />
          <ToolButton $w={16}><Caret /></ToolButton>
          <ToolButton $w={32}><BoldGlyph $size={18}>A</BoldGlyph></ToolButton>
          <ToolButton $w={8}><Caret /></ToolButton>
          <ToolButton $w={6} />
          <Tool name="vertices" w={26} />
          <ToolSep $l={1} $r={3} />
          <Combo $w={170}>
            <ComboText>
              {Icons.fontFace}
              Arial
            </ComboText>
            <ComboDrop><Caret /></ComboDrop>
          </Combo>
          <ToolButton $w={6} />
          <Combo $w={46}>
            <ComboText>10</ComboText>
            <ComboDrop><Caret /></ComboDrop>
          </Combo>
          <ToolButton $w={36}><BoldGlyph>B</BoldGlyph></ToolButton>
          <ToolButton $w={8}><BoldGlyph $italic>I</BoldGlyph></ToolButton>
          <ToolButton $w={8} />
          <ToolButton $w={24}><BoldGlyph $under>U</BoldGlyph></ToolButton>
          <ToolSep $l={3} $r={4} />
          <ToolButton $w={20}>
            <ColorGlyph>
              <BoldGlyph>A</BoldGlyph>
              <ColorBar $color="#000" />
            </ColorGlyph>
          </ToolButton>
          <ToolButton $w={18}><Caret /></ToolButton>
          <ToolButton $w={30}>
            <ColorGlyph>
              {Icons.fill}
              <ColorBar $color="#ffffc8" />
            </ColorGlyph>
          </ToolButton>
          <ToolButton $w={8}><Caret /></ToolButton>
          <ToolButton $w={8} />
          <ToolButton $w={24}>
            <ColorGlyph>
              {Icons.pen}
              <ColorBar $color="#000" />
            </ColorGlyph>
          </ToolButton>
          <ToolButton $w={14}><Caret /></ToolButton>
        </Band>
        <StatusBar>
          <StatusPanel $w={344} $plain>Save this layer's data as a shapefile or geodatabase feature class</StatusPanel>
          <StatusPanel $w={21} />
          <StatusPanel $w={156}>622.90&nbsp; 364.48 Unknown Units</StatusPanel>
          <StatusPanel $grow />
          <Grip>
            <svg width="16" height="16" viewBox="0 0 16 16" shapeRendering="crispEdges">
              <path d="M15 4L4 15M15 8L8 15M15 12l-3 3" stroke={SHADE} fill="none" />
              <path d="M15 5L5 15M15 9L9 15M15 13l-2 2" stroke="#fff" fill="none" />
            </svg>
          </Grip>
        </StatusBar>
      </Frame>
      <Menu items={contextMenu} left={112} top={169} w={208} />
      <Menu items={dataMenu} left={319} top={448} w={204} />
    </Window>
  );
}
